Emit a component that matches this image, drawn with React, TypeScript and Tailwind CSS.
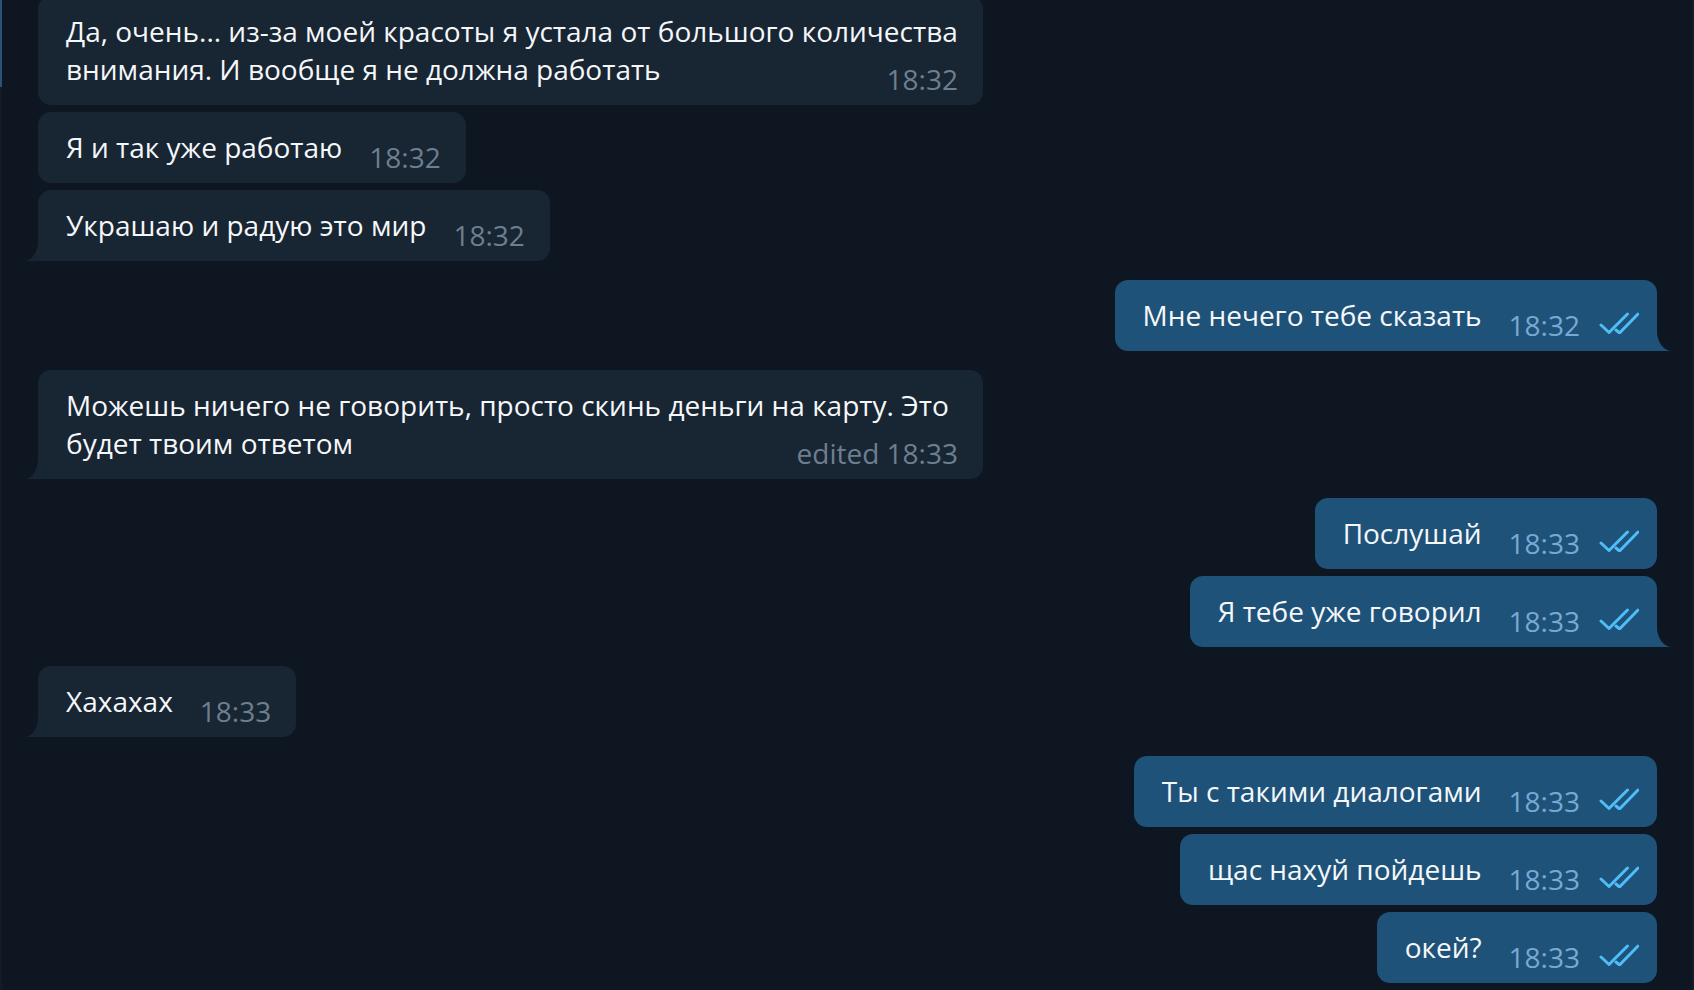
import React from "react";

type Msg = {
  id: number;
  out: boolean;
  lines: string[];
  time: string;
  tail?: boolean;
  gap: number; // space above the bubble
  wide?: boolean;
};

const messages: Msg[] = [
  {
    id: 1,
    out: false,
    lines: ["Да, очень... из-за моей красоты я устала от большого количества", "внимания. И вообще я не должна работать"],
    time: "18:32",
    gap: -4,
    wide: true,
  },
  { id: 2, out: false, lines: ["Я и так уже работаю"], time: "18:32", gap: 7 },
  { id: 3, out: false, lines: ["Украшаю и радую это мир"], time: "18:32", gap: 7, tail: true },
  { id: 4, out: true, lines: ["Мне нечего тебе сказать"], time: "18:32", gap: 19, tail: true },
  {
    id: 5,
    out: false,
    lines: ["Можешь ничего не говорить, просто скинь деньги на карту. Это", "будет твоим ответом"],
    time: "edited 18:33",
    gap: 19,
    tail: true,
    wide: true,
  },
  { id: 6, out: true, lines: ["Послушай"], time: "18:33", gap: 19 },
  { id: 7, out: true, lines: ["Я тебе уже говорил"], time: "18:33", gap: 7, tail: true },
  { id: 8, out: false, lines: ["Хахахах"], time: "18:33", gap: 19, tail: true },
  { id: 9, out: true, lines: ["Ты с такими диалогами"], time: "18:33", gap: 19 },
  { id: 10, out: true, lines: ["щас нахуй пойдешь"], time: "18:33", gap: 7 },
  { id: 11, out: true, lines: ["окей?"], time: "18:33", gap: 7 },
];

function Checks() {
  return (
    <svg width="40" height="22" viewBox="0 0 40 22" className="mt-[16px] ml-[19px] shrink-0">
      <path d="M2 13 L10 20.5 L28.5 2" fill="none" stroke="#4fbdf7" strokeWidth="3" strokeLinecap="round" strokeLinejoin="round" />
      <path d="M17 18 L20.5 21 L39 2" fill="none" stroke="#4fbdf7" strokeWidth="3" strokeLinecap="round" strokeLinejoin="round" />
    </svg>
  );
}

function Tail({ out }: { out: boolean }) {
  if (out) {
    return (
      <svg width="15" height="20" viewBox="0 0 15 20" className="absolute right-[-15px] bottom-0">
        <path d="M0 0 A15 20 0 0 0 15 20 H0 Z" fill="#1e5279" />
      </svg>
    );
  }
  return (
    <svg width="14" height="20" viewBox="0 0 14 20" className="absolute left-[-14px] bottom-0">
      <path d="M14 0 A14 20 0 0 1 0 20 H14 Z" fill="#182533" />
    </svg>
  );
}

function Bubble({ msg }: { msg: Msg }) {
  const last = msg.lines[msg.lines.length - 1];
  const rest = msg.lines.slice(0, -1);
  const corner = msg.tail ? (msg.out ? "rounded-br-none" : "rounded-bl-none") : "";

  return (
    <div className={msg.out ? "flex justify-end pr-[35px]" : "flex justify-start pl-[36px]"} style={{ marginTop: msg.gap }}>
      <div
        className={`relative rounded-[13px] ${corner} pt-[16px] pb-[7px] pl-[28px] ${
          msg.out ? "bg-[#1e5279] pr-[18px]" : "bg-[#182533] pr-[25px]"
        } ${msg.wide ? "w-[945px]" : ""}`}
      >
        {rest.map((line) => (
          <div key={line} className="leading-[38px] whitespace-nowrap">
            {line}
          </div>
        ))}
        <div className="flex items-start">
          <span className="leading-[38px] whitespace-nowrap">{last}</span>
          <span
            className={`ml-auto pl-[27px] mt-[10px] leading-[38px] whitespace-nowrap ${
              msg.out ? "text-[#78a9d4]" : "text-[#6d7f8f]"
            }`}
          >
            {msg.time}
          </span>
          {msg.out && <Checks />}
        </div>
        {msg.tail && <Tail out={msg.out} />}
      </div>
    </div>
  );
}

export default function App() {
  return (
    <div
      className="flex h-[990px] w-[1694px] overflow-hidden bg-[#0e1621] text-[28px] text-[#f5f7f9]"
      style={{ fontFamily: '"Open Sans", "Noto Sans", sans-serif' }}
    >
      <div className="flex w-[2px] shrink-0 flex-col bg-[#131c26]">
        <div className="h-[87px] bg-[#2b5278]" />
      </div>
      <div className="flex flex-1 flex-col">
        {messages.map((m) => (
          <Bubble key={m.id} msg={m} />
        ))}
      </div>
      <div className="w-[2px] shrink-0 bg-[#141d27]" />
    </div>
  );
}
